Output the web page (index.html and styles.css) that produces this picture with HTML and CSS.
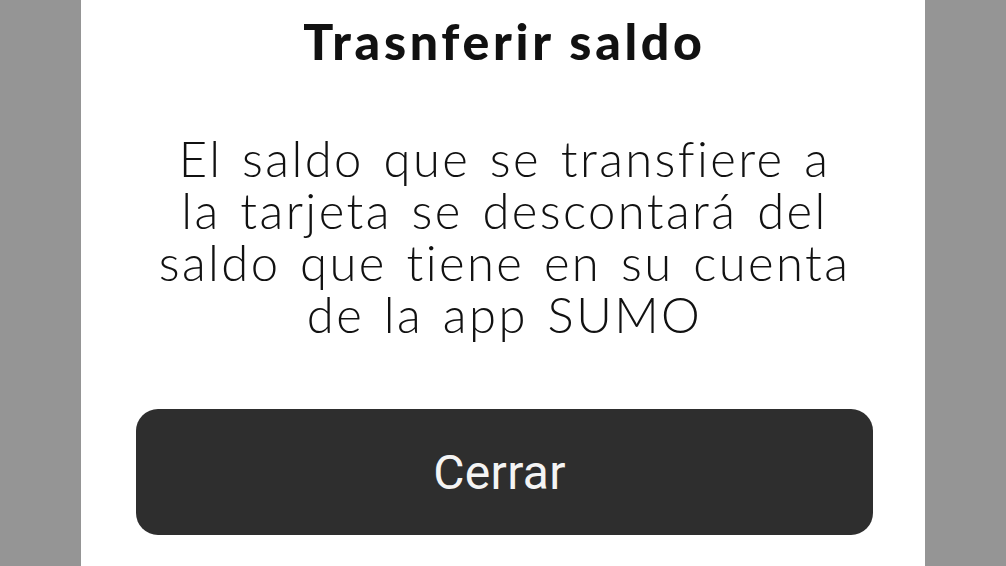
FILE: index.html
```html
<!DOCTYPE html>
<html lang="es">
<head>
<meta charset="utf-8">
<title>Trasnferir saldo</title>
<link rel="stylesheet" href="styles.css">
</head>
<body>
<div class="page">
  <div class="dialog">
    <h1 class="title">Trasnferir saldo</h1>
    <p class="message">El saldo que se transfiere a<br>la tarjeta se descontará del<br>saldo que tiene en su cuenta<br>de la app SUMO</p>
    <button class="close-btn" type="button">Cerrar</button>
  </div>
</div>
</body>
</html>
```
FILE: styles.css
```css
html, body {
  margin: 0;
  padding: 0;
  height: 100%;
}
body {
  background: #959595;
  overflow: hidden;
}
.page {
  display: flex;
  justify-content: center;
  height: 100%;
}
.dialog {
  width: 844px;
  background: #ffffff;
  height: 566px;
  display: flex;
  flex-direction: column;
  align-items: center;
  box-sizing: border-box;
  padding-top: 13px;
  padding-left: 3px;
}
.title {
  margin: 0;
  font-family: "Lato", "Noto Sans", sans-serif;
  font-weight: 900;
  font-size: 50px;
  line-height: 56px;
  color: #111111;
  letter-spacing: 3.7px;
}
.message {
  margin: 63px 0 0 0;
  font-family: "Lato", "Noto Sans", sans-serif;
  font-weight: 300;
  font-size: 49px;
  line-height: 52px;
  color: #111111;
  text-align: center;
  letter-spacing: 2.4px;
  word-spacing: 4px;
}
.close-btn {
  margin-top: 69px;
  width: 737px;
  height: 126px;
  border: none;
  border-radius: 22px;
  background: #2e2e2e;
  color: #f4f4f4;
  font-family: "Roboto", sans-serif;
  font-size: 48px;
  letter-spacing: 0.3px;
  cursor: pointer;
  padding: 0 10px 0 0;
}
```
